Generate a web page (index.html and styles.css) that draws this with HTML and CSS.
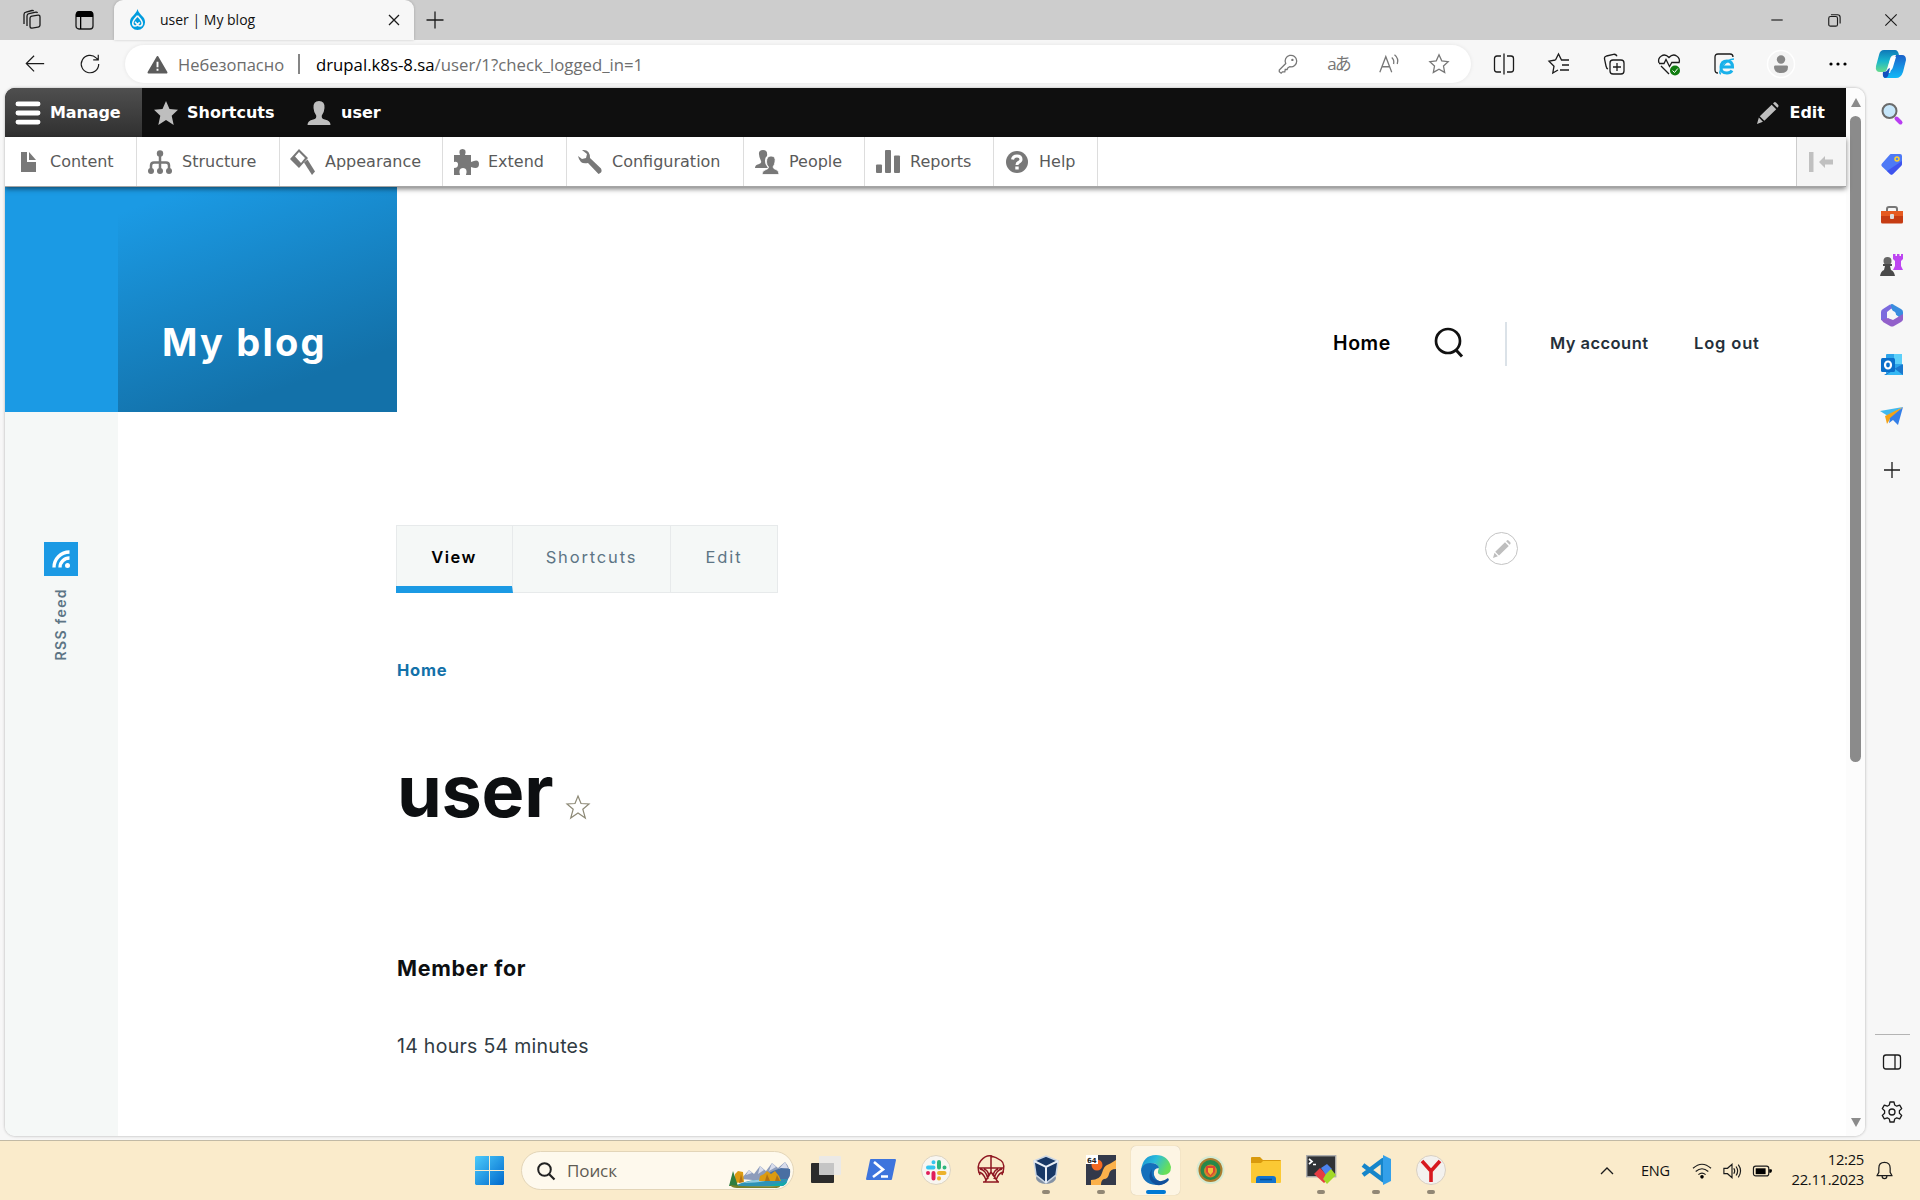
FILE: index.html
```html
<!DOCTYPE html>
<html lang="ru">
<head>
<meta charset="utf-8">
<title>user | My blog</title>
<link rel="stylesheet" href="styles.css">
</head>
<body>
<div class="desktop">
  <header class="tabstrip">
    <div class="strip-tools">
      <svg class="i24" viewBox="0 0 24 24"><g class="ln"><rect x="10" y="8" width="10" height="12" rx="2" transform="skewY(-9) translate(0 2)"/><path d="M7 18V8q0-2 2-2.400l7-1.400q1-.2 1.500.8M4 16V6.500q0-2 2-2.400l6-1.600q1.200-.2 1.500.8"/></g></svg>
      <svg class="i24" viewBox="0 0 24 24"><rect class="ln" x="4" y="4" width="17" height="17" rx="3"/><path d="M4 9V6q0-3 3-3h11q3 0 3 3v3zM8 9h1.300v12H8z"/></svg>
    </div>
    <div class="tab">
      <svg class="drop" viewBox="0 0 18 22"><path fill="#009cde" d="M9 0C8 3.500 6.300 5 4.400 7 2 9.300 1 11 1 14a8 8 0 0 0 16 0c0-3-1-4.700-3.400-7C11.700 5 10 3.500 9 0z"/><path fill="none" stroke="#f7f7f7" stroke-width="1.700" d="M9 7c-2 2.600-5 5-5 8 0 3.600 4 3.600 5.300 1.200l2-2.400M9 7c2 2.600 5 5 5 8 0 3.600-4 3.600-5.300 1.200L6.500 13.500"/></svg>
      <span class="tab-title">user | My blog</span>
      <svg class="i16" viewBox="0 0 16 16"><path class="ln" stroke-width="1.500" d="M3 3l10 10M13 3L3 13"/></svg>
    </div>
    <svg class="i24 newtab" viewBox="0 0 24 24"><path class="ln" d="M12 3.500v17M3.500 12h17"/></svg>
    <div class="wincontrols">
      <svg viewBox="0 0 16 16"><path class="ln" d="M1.500 8h13"/></svg>
      <svg viewBox="0 0 16 16"><rect class="ln" x="2" y="4" width="10" height="11" rx="2"/><path class="ln" d="M4.500 2h7.500q3 0 3 3v7"/></svg>
      <svg viewBox="0 0 16 16"><path class="ln" d="M1.500 1.500l13 13M14.500 1.500l-13 13"/></svg>
    </div>
  </header>

  <div class="navbar">
    <svg class="i24 back" viewBox="0 0 24 24"><path class="ln" stroke-width="1.600" d="M22 11.500H2.500M11 3l-8.500 8.500L11 20"/></svg>
    <svg class="i24 reload" viewBox="0 0 24 24"><path class="ln" stroke-width="1.600" d="M21.500 12a9.500 9.500 0 1 1-2.800-6.700L21 7.300M21 2v5.400h-5.500"/></svg>
    <div class="address">
      <svg class="warn" viewBox="0 0 22 20"><path fill="#5c5c5c" stroke="#5c5c5c" stroke-width="2" stroke-linejoin="round" d="M11 2l9.500 16.500h-19z"/><path stroke="#fff" stroke-width="2" d="M11 7v6M11 14.500v2"/></svg>
      <span class="insecure">Небезопасно</span>
      <span class="url-sep"></span>
      <span class="url"><b>drupal.k8s-8.sa</b>/user/1?check_logged_in=1</span>
      <div class="address-tools">
        <svg class="i24" viewBox="0 0 24 24"><path class="lg" d="M9.500 11.500A6.300 6.300 0 1 1 14 15l-2 1-1 2H9l-.5 2.500H6L4.500 22 2.500 20.500v-2z"/><circle cx="16.800" cy="7.500" r="1.300" fill="#777"/></svg>
        <span class="glyph-translate">aあ</span>
        <svg class="i24" viewBox="0 0 24 24"><path class="lg" d="M2 21L8.500 4 15 21M4.500 15h8M15 5q3 2.500 2 7M18 2q5 4 3 10"/></svg>
        <svg class="i24" viewBox="0 0 24 24"><path class="lg" d="M12 2l3 6.500 7 .9-5.100 4.800 1.300 7L12 17.700l-6.200 3.500 1.300-7L2 9.400l7-.9z"/></svg>
      </div>
    </div>
    <div class="browser-tools">
      <svg class="i24" viewBox="0 0 24 24"><path class="ln" d="M9 4H5q-2.500 0-2.500 2.500v11Q2.500 20 5 20h4M15 4h4q2.500 0 2.500 2.500v11Q21.500 20 19 20h-4M12 1.500v21"/></svg>
      <svg class="i24" viewBox="0 0 24 24"><path class="ln" d="M8.500 8L2 9.200l5 5L5.800 21l5.200-3M8.500 8L11.500 2l3 6H22M15 13h7M13 18h9"/></svg>
      <svg class="i24" viewBox="0 0 24 24"><rect class="ln" x="8" y="8" width="14" height="14" rx="3"/><path class="ln" d="M15 11v8M11 15h8M6 17q-1.500-.5-2-3L2.500 7q-.4-2.300 2-3l7-1.700q2.500-.4 3.500 2"/></svg>
      <svg class="i24" viewBox="0 0 24 24"><path class="ln" stroke-width="1.600" d="M2 11C0 5 7 0 12 5.500 17 0 24 5 22 11M2 11.500h5l2-4 3.500 7 2.300-4H22M4 14l8 8"/><circle cx="18" cy="18.500" r="5" fill="#107c10"/><path stroke="#fff" fill="none" d="M15.500 18.500l2 2 3.300-4"/></svg>
      <svg class="i24" viewBox="0 0 24 24"><path class="ln" stroke-width="1.600" d="M6 21q-3 0-3-3V5q0-3 3-3h12q3 0 3 3"/><path fill="none" stroke="#1ab1ea" stroke-width="3" d="M9.500 15h11q0-6-5.500-6t-6 6 6 6q3.500 0 5-2.500"/><path fill="none" stroke="#1ab1ea" stroke-width="1.500" d="M9 22q-3-1 2-8t11-7"/></svg>
      <svg class="avatar" viewBox="0 0 28 28"><circle cx="14" cy="14" r="13.500" fill="#f4f4f4" stroke="#fff" stroke-width="1.500"/><circle cx="14" cy="9.500" r="4.200" fill="#878787"/><path fill="#878787" d="M8 15.500h12q1 0 1 1.500 0 6-7 6t-7-6q0-1.500 1-1.500z"/></svg>
      <svg class="i24" viewBox="0 0 24 24"><circle cx="5" cy="12" r="1.600"/><circle cx="12" cy="12" r="1.600"/><circle cx="19" cy="12" r="1.600"/></svg>
      <svg class="copilot" viewBox="0 0 30 30"><defs><linearGradient id="cpa" x1="0" y1="0" x2="0" y2="1"><stop offset="0" stop-color="#0f78b8"/><stop offset=".5" stop-color="#18b5cd"/><stop offset="1" stop-color="#68dc8c"/></linearGradient><linearGradient id="cpb" x1="0" y1="0" x2="0" y2="1"><stop offset="0" stop-color="#1b61c9"/><stop offset="1" stop-color="#12baf8"/></linearGradient></defs><path fill="url(#cpb)" d="M20 6h6q4 0 4 5l-3 12q-2 6-7 6H9q-2 0-2-5h7z"/><path fill="url(#cpa)" d="M8 1h11q3 0 4 5h-4q-4 0-5 4l-3 10q-1 3-4 3H4q-5 0-4-6L3 6q1-5 5-5z"/><path fill="#fff" d="M14 11q1-3 4-3h2l-3 10q-1 4-5 4h-1z"/><path fill="#1450bd" d="M7 23q4 0 5-3l2-1-2 8q-1 2-3 2-3-1-2-6z"/></svg>
    </div>
  </div>

  <div class="window-body">
    <div class="page-frame">
      <div class="page">
        <nav class="admin-bar">
          <a class="bar-item manage"><svg viewBox="0 0 25 24"><path fill="#fff" d="M2 0h21a2 2 0 0 1 0 5H2a2 2 0 0 1 0-5zM2 9.500h21a2 2 0 0 1 0 5H2a2 2 0 0 1 0-5zM2 19h21a2 2 0 0 1 0 5H2a2 2 0 0 1 0-5z"/></svg><span>Manage</span></a>
          <a class="bar-item shortcuts"><svg viewBox="0 0 24 24"><path fill="#bebebe" d="M12 0l3.500 8 8.500.8-6.300 6 2 9.200L12 19l-7.700 5 2-9.200L0 8.800 8.500 8z"/></svg><span>Shortcuts</span></a>
          <a class="bar-item account"><svg viewBox="0 0 24 24"><path fill="#bebebe" d="M12 0q6 0 5.500 7-.2 4-2.700 7.500-.6 3.300 3 4 5.700 1 5.700 5.500H.5q0-4.500 5.700-5.500 3.600-.7 3-4Q6.700 11 6.500 7 6 0 12 0z"/></svg><span>user</span></a>
          <a class="bar-item contextual"><svg viewBox="0 0 24 24"><path fill="#bebebe" d="M16 3l5 5L8 20.500l-5-5zM17.500 1.500l1-1q1-1 2.200 0L23 3q1 1 .2 2.200l-1 1zM2 17l4.500 4.500L0 24z"/></svg><span>Edit</span></a>
        </nav>
        <nav class="admin-tray">
          <a class="t-content"><svg viewBox="0 0 24 24"><path d="M5 2h6v10h9v10H5zM13 2l7 8h-7z"/></svg><span>Content</span></a>
          <a class="t-structure"><svg viewBox="0 0 24 24"><circle cx="12" cy="3.500" r="3.200"/><circle cx="3" cy="21" r="3"/><circle cx="12" cy="21" r="3"/><circle cx="21" cy="21" r="3"/><path fill="none" stroke="#787878" stroke-width="2.500" d="M12 4v16M3 20v-4.500q0-3 3-3h12q3 0 3 3V20"/></svg><span>Structure</span></a>
          <a class="t-appearance"><svg viewBox="0 0 24 24"><path fill-rule="evenodd" d="M8 -1l9 9-9 10-9-9zM8 2L4 6.500l6 6.500 4-5z"/><path d="M13 12.500l3.500-3 7.500 12-3 3.500z"/></svg><span>Appearance</span></a>
          <a class="t-extend"><svg viewBox="0 0 24 24"><path d="M0 5h6Q4-1 8.500-1T11 5h6v7q8-4 8 2t-8 3v8h-5q2-7-3-7t-3 7H0v-7q4 0 4-3.500T0 12z"/></svg><span>Extend</span></a>
          <a class="t-configuration"><svg viewBox="0 0 24 24"><path d="M4 0q8-1 8 8L23 18.500q2 4-2.500 5.500L10 13q-8 2-10-7l4 3 4-1 1-4z"/></svg><span>Configuration</span></a>
          <a class="t-people"><svg viewBox="0 0 24 24"><path d="M8 0q5 0 4 6-3 2-1.500 8L13 18H0q0-3 3.500-3.800T6 11Q1 0 8 0z"/><path stroke="#fff" stroke-width=".8" d="M16 6q5 0 4 6-.5 3-2 5 .5 2 3 2.500 3 1 3 5H7q0-4 4-5 2.500-.5 2.500-2.500-2-2-2-5 0-6 4.500-6z"/></svg><span>People</span></a>
          <a class="t-reports"><svg viewBox="0 0 24 24"><rect y="14.500" width="6" height="8.500" rx="1"/><rect x="9" y="0" width="6" height="23" rx="1"/><rect x="18" y="5.500" width="6" height="17.500" rx="1"/></svg><span>Reports</span></a>
          <a class="t-help"><svg viewBox="0 0 24 24"><circle cx="12" cy="12" r="11"/><path fill="none" stroke="#fff" stroke-width="3" d="M7.500 9.500Q8 6 12 6t4 3.300q0 2-2.300 3-1.700.8-1.700 2.700"/><path stroke="#fff" stroke-width="3.400" d="M12 16.500v3"/></svg><span>Help</span></a>
          <a class="tray-toggle"><svg viewBox="0 0 24 20"><path fill="#c0c0c0" d="M0 0h4.500v20H0zM10 10l6-6v3.500h8v5h-8V16z"/></svg></a>
        </nav>
        <div class="site">
          <div class="rail">
            <div class="rail-top"></div>
            <svg class="rss" viewBox="0 0 34 34"><path fill="none" stroke="#fff" stroke-width="3.300" d="M10 25.500A15.500 15.500 0 0 1 25.500 10M16 25.500a9.500 9.500 0 0 1 9.500-9.500"/><circle cx="23.500" cy="23.500" r="2.500" fill="#fff"/></svg>
            <span class="rss-label">RSS feed</span>
          </div>
          <div class="site-main">
            <div class="site-header">
              <div class="branding">My blog</div>
              <div class="menu">
                <a class="m-home">Home</a>
                <svg class="m-search" viewBox="0 0 30 32"><circle cx="14" cy="14" r="12" fill="none" stroke="#111" stroke-width="2.700"/><path stroke="#111" stroke-width="3" d="M22 23l6 6.500"/></svg>
                <a class="m-account">My account</a>
                <a class="m-logout">Log out</a>
              </div>
            </div>
            <main class="content">
              <div class="tab-row">
                <div class="tabs"><a class="active">View</a><a class="tb-short">Shortcuts</a><a class="tb-edit">Edit</a></div>
                <div class="pencil"><svg viewBox="0 0 24 24"><path fill="#bebebe" d="M16 3l5 5L8 20.500l-5-5zM17.500 1.500l1-1q1-1 2.200 0L23 3q1 1 .2 2.200l-1 1zM2 17l4.500 4.500L0 24z"/></svg></div>
              </div>
              <a class="crumb">Home</a>
              <div class="title-row"><h1>user</h1><svg viewBox="0 0 24 24"><path fill="none" stroke="#8d8976" stroke-width="1.200" d="M12 1l3 7.500 8 .5-6.200 5.200 2.500 8.800-7.300-5-7.300 5 2.500-8.800L1 9l8-.5z"/></svg></div>
              <h4>Member for</h4>
              <p class="since">14 hours 54 minutes</p>
            </main>
          </div>
        </div>
      </div>
      <div class="scrollbar"><i class="up"></i><i class="thumb"></i><i class="down"></i></div>
    </div>
    <aside class="sidebar">
      <svg viewBox="0 0 24 24"><path stroke="#b83df2" stroke-width="4" stroke-linecap="round" d="M16.500 16.500l4 4"/><circle cx="9.500" cy="9" r="7" fill="#c6e6fa" stroke="#6b6b6b" stroke-width="2"/></svg>
      <svg viewBox="0 0 24 24"><path fill="#4d79f6" d="M11 2h9q2 0 2 2v8q0 1-1 2l-8 8q-1.500 1.500-3 0L2 14.500q-1.500-1.500 0-3L9.500 3q.5-1 1.500-1z"/><path fill="#373fea" d="M22 9v3q0 1-1 2l-8 8q-1.500 1.500-3 0l-3-3z" opacity=".65"/><circle cx="17" cy="7" r="2" fill="#5187e9" stroke="#ffd12e" stroke-width="1.500"/></svg>
      <svg viewBox="0 0 24 24"><path fill="none" stroke="#777" stroke-width="2" d="M7 8V6q0-2 2-2h6q2 0 2 2v2"/><rect x="1" y="8" width="22" height="12.500" rx="1.500" fill="#c63c13"/><path fill="#e65a20" d="M1 8h22v5H1z"/><rect x="10" y="11" width="4" height="5" rx="1" fill="#ddd"/></svg>
      <svg viewBox="0 0 24 24"><path fill="#bd45f1" d="M13 1h2.500v2H17V1h2.500v2H21V1h2v5l-2 2v5l2 4H13l2-4V8l-2-2z"/><circle cx="7.500" cy="8" r="4" fill="#666"/><path fill="#4a4a4a" d="M3 11h9v2h-2l1 4q3 1 4 6H0q1-5 4-6l1-4H3z"/></svg>
      <svg viewBox="0 0 24 24"><path fill="#398ddf" d="M10 2q2-2 4 0l7 4q2 1 2 3v8l-8-6-4-6z"/><path fill="#7b6ade" d="M10 1.500L3 6Q1 7 1 9v8l6 3V9l5-4z"/><path fill="#9260ca" d="M2 17l6-2 5 2 10-6v5q0 2-2 3l-7 4q-2 1-4 0l-7-4z"/><circle cx="12" cy="12" r="4" fill="#f7f7f7"/></svg>
      <svg viewBox="0 0 24 24"><rect x="6" y="1" width="16" height="20" rx="1" fill="#2ca4ea"/><path fill="#5cd0fa" d="M14 1h8v10h-8z"/><path fill="#1a78ce" d="M4 22h19V11l-9 5z"/><path fill="#36b8f4" d="M6 22h17l-8-6z"/><rect x="1" y="5" width="14" height="14" rx="1.500" fill="#0a6fca"/><ellipse cx="8" cy="12" rx="3" ry="3.500" fill="none" stroke="#fff" stroke-width="2.200"/></svg>
      <svg viewBox="0 0 24 24"><path fill="#41b9ee" d="M0 7l23-4-15 9z"/><path fill="#f4a316" d="M23 3L5 12l2 8 3-5z"/><path fill="#347fe8" d="M23 3l-5 18-5-5-4 3 1-5z"/></svg>
      <svg class="add" viewBox="0 0 24 24"><path class="ln" d="M12 4v16M4 12h16"/></svg>
      <span class="side-line"></span>
      <svg class="panel" viewBox="0 0 24 24"><rect class="ln" x="3.500" y="5" width="17" height="14" rx="2.500" stroke-width="1.600"/><path class="ln" d="M15 5v14"/></svg>
      <svg class="gear" viewBox="0 0 24 24"><path class="ln" stroke-width="1.500" stroke-linejoin="round" d="M10 2h4l.7 3 2 1.200 3-1 2 3.400-2.300 2.200v2.400l2.300 2.200-2 3.400-3-1-2 1.200-.7 3h-4l-.7-3-2-1.200-3 1-2-3.400 2.300-2.200v-2.400L2.300 8.600l2-3.400 3 1 2-1.200z"/><circle class="ln" cx="12" cy="12" r="3"/></svg>
    </aside>
  </div>

  <footer class="taskbar">
    <div class="apps">
      <svg class="start" viewBox="0 0 29 29"><defs><linearGradient id="win" x1="0" y1="0" x2="1" y2="1"><stop offset="0" stop-color="#4ccbfb"/><stop offset="1" stop-color="#0069cd"/></linearGradient></defs><path fill="url(#win)" d="M1 0h13v14H0V1zM15 0h13l1 1v13H15zM0 15h14v14H1l-1-1zM15 15h14v13l-1 1H15z"/></svg>
      <div class="search">
        <svg class="glass" viewBox="0 0 18 18"><circle cx="7.500" cy="7.500" r="6.300" fill="none" stroke="#222" stroke-width="2"/><path stroke="#222" stroke-width="2.200" d="M12 12l5.500 5.500"/></svg>
        <span>Поиск</span>
        <svg class="scene" viewBox="0 0 62 27"><path fill="#8d9cbb" d="M12 18L20 9l5 4 6-8 6 5 6-8 6 5 7-6q5 5 5 14l-5 7z"/><path fill="#d8dceb" d="M31 5l4 4-6 4zM43 2l4 4-7 4zM56 1l3 6-9 1zM20 9l3 3-6 2z"/><path fill="#496fa2" d="M34 15l10-5 8-3 9 1q1 7-3 11H40z"/><path fill="#2d93b5" d="M6 26q8-9 53-8-1 5-5 7z"/><path fill="#94cce0" d="M14 22q10-4 28-4-8 4-28 4z"/><path fill="#12a9aa" d="M38 25q10-3 20-4-2 4-6 4z"/><path fill="#dc9b12" d="M6 22V13l3-3 5 1 1 10zM30 20l1-5 4-2 3-3 4 3 4-3 4 5 2 5z"/><path fill="#b37214" d="M10 22l2-9 2 8zM36 20l2-7 3 7zM46 20l2-6 3 6z"/><path fill="#2f7e40" d="M0 25L4 10l5 15z"/><path fill="#77802b" d="M1 24q15 2 50 1 0 2-6 2H8q-5 0-7-3z"/></svg>
      </div>
      <div class="app"><svg viewBox="0 0 32 32"><rect x="1" y="9" width="23" height="20" rx="1" fill="#2b2b2b"/><rect x="9" y="2" width="22" height="19" rx="1" fill="#e9e9e9" fill-opacity=".9"/><path fill="#bdbdbd" d="M9 9h15v12H9z" opacity=".7"/></svg></div>
      <div class="app"><svg viewBox="0 0 32 32"><path fill="#3d74dd" d="M6 5h24q1 0 1 1l-4 19q0 1-1 1H2q-1 0-1-1L5 6q0-1 1-1z"/><path fill="none" stroke="#fff" stroke-width="2.600" d="M9 8l9 7.500L8 23M16 22.500h7"/></svg></div>
      <div class="app"><svg viewBox="0 0 32 32"><circle cx="16" cy="16" r="14.500" fill="#f8f6f1" stroke="#ddd4c1"/><g stroke-width="4" stroke-linecap="round"><path stroke="#36c5f0" d="M8 13.500h5.500M13.500 8.200v.1"/><path stroke="#2eb67d" d="M19 8v5.500M24.500 13.500v.1"/><path stroke="#ecb22e" d="M19 19h5.500M19 24.300v.1"/><path stroke="#e01e5a" d="M13.500 19v5.500M8 19v.1"/></g></svg></div>
      <div class="app"><svg viewBox="0 0 32 32"><g fill="none" stroke="#8f1722" stroke-width="1.500"><path d="M5 21Q1 12 6 6.500T16 2t10 4.500T27 21M16 1v17M3 14h26M8 28h16M10 28l6-10 7 10M5 15q6 1 8 10M3 18q5 0 8 8M9 15q4 1 5 7M27 15q-6 1-8 10M29 18q-5 0-8 8M23 15q-4 1-5 7"/></g></svg></div>
      <div class="app run"><svg viewBox="0 0 32 32"><ellipse cx="16" cy="24" rx="10" ry="6" fill="#8492a5"/><path fill="#183866" stroke="#cbd7e6" stroke-width="1.500" d="M16 2l12 5-2 14-10 8L6 21 4 7z"/><path fill="none" stroke="#e8eef6" stroke-width="2" d="M4 7l12 6 12-6M16 13v16"/></svg></div>
      <div class="app run"><svg viewBox="0 0 32 32"><rect x="1" y="1" width="30" height="30" fill="#33394a"/><circle cx="12" cy="11" r="5.500" fill="#f46a22"/><path fill="#fbb14b" d="M6 31v-5q9 0 11-7t5-8 9-5v9q-6 0-7 5-1 5-5 5-3 1-3 6z"/><rect x="1" y="1" width="12" height="9" fill="#fff"/><text x="2" y="8.500" class="n64">64</text></svg></div>
      <div class="app run current"><svg viewBox="0 0 32 32"><defs><linearGradient id="eg" x1="0" y1="0" x2="1" y2=".4"><stop offset="0" stop-color="#168bd1"/><stop offset=".5" stop-color="#2cbddb"/><stop offset="1" stop-color="#68df58"/></linearGradient></defs><path fill="url(#eg)" d="M1 16Q3 1 16 1q12 0 15 12 0 8-8 8-6 0-5-4 2-4-2-7-7-3-15 6z"/><path fill="#1570bb" d="M1 16Q3 9 10 9q8 0 9 5-6 0-5 7 2 7 10 7 2 0 4-1-4 4-12 4Q2 30 1 16z"/><path fill="#10509c" d="M12 15q-2 9 4 11 6 3 12-2l1 2q-5 6-12 5-12-5-5-16z"/></svg></div>
      <div class="app"><svg viewBox="0 0 32 32"><circle cx="15.500" cy="16" r="14" fill="#d5ead3"/><circle cx="15.500" cy="16" r="12" fill="#a97c2e"/><circle cx="15.500" cy="16" r="10" fill="#27884a"/><circle cx="15.500" cy="17" r="6.500" fill="#ce852b"/><path fill="#df4433" d="M11 12h9v6l-4.500 5-4.500-5z"/><path fill="#f1bd38" d="M13 14h5v4l-2.500 3-2.500-3z"/></svg></div>
      <div class="app"><svg viewBox="0 0 32 32"><path fill="#d99a0d" d="M1 4q0-1 1-1h8l3 3h17q1 0 1 1v6H1z"/><path fill="#fbc934" d="M13 7h18v21q0 1-1 1H2q-1 0-1-1V9h10z"/><path fill="#1273cd" d="M6 29v-4q0-3 3-3h14q3 0 3 3v4z"/><path stroke="#064e94" stroke-width="1.500" d="M10 25.500h12"/></svg></div>
      <div class="app run"><svg viewBox="0 0 32 32"><rect x="1.700" y="1.700" width="29" height="21" fill="#303236" stroke="#acacac" stroke-width="1.400"/><path fill="none" stroke="#fff" stroke-width="1.700" d="M4 5l3 2.500L4 10M8 10.500h3"/><path fill="#e63c43" d="M9 20l6-6 10 10-6 5z"/><path fill="#4c82ee" d="M16 14l6-4 5 5-6 6z"/><path fill="#a3d928" d="M21 20l5-5 5 6-9 9-4-5z"/></svg></div>
      <div class="app run"><svg viewBox="0 0 32 32"><path fill="none" stroke="#1585ca" stroke-width="4.500" stroke-linejoin="round" d="M3 11l20 15V6L3 21"/><path fill="#33a0ea" d="M23 1l8 4v22l-8 4z"/></svg></div>
      <div class="app run"><svg viewBox="0 0 32 32"><circle cx="16" cy="16" r="14.500" fill="#f3f1ee" stroke="#d9d0c2"/><path fill="none" stroke="#d7191f" stroke-width="3.600" d="M7 7l9 10 9-10M16 16v12"/></svg></div>
    </div>
    <div class="systray">
      <svg class="chev" viewBox="0 0 16 16"><path class="ln" stroke-width="1.800" d="M2 11l6-6 6 6"/></svg>
      <span class="lang">ENG</span>
      <svg class="ico" viewBox="0 0 22 20"><g class="ln"><path d="M1 7q10-9 20 0M4 10.500q7-6 14 0M7 14q4-3.500 8 0"/></g><circle cx="11" cy="16.500" r="2"/></svg>
      <svg class="ico" viewBox="0 0 22 20"><g class="ln"><path d="M2 7h4l5-4.500v15L6 13H2zM13 7q2 3 0 6M15.500 5q3.500 5 0 10M18 3q5 7 0 14"/></g></svg>
      <svg class="ico" viewBox="0 0 22 20"><rect class="ln" x="1.500" y="4.500" width="17" height="11" rx="2.500" stroke-width="1.700"/><rect x="4" y="7" width="11" height="6.500"/><path d="M19 8h2q1 0 1 1.500T21 12h-2z"/></svg>
      <div class="clock"><span>12:25</span><span>22.11.2023</span></div>
      <svg class="bell" viewBox="0 0 18 20"><path class="ln" stroke-width="1.500" stroke-linejoin="round" d="M1 15.500h16l-2-3.500V7.500q0-6-6-6t-6 6V12zM6.500 16q0 2.500 2.500 2.500t2.500-2.500"/></svg>
    </div>
  </footer>
</div>
</body>
</html>
```
FILE: styles.css
```css
* { box-sizing: border-box; }
body { margin: 0; width: 1920px; height: 1200px; overflow: hidden; font-family: "Open Sans", "Noto Sans", sans-serif; color: #111; }
svg { display: block; flex: none; overflow: visible; }
span, a { white-space: nowrap; }
.ln { fill: none; stroke: #1b1b1b; stroke-width: 1.300; }
.lg { fill: none; stroke: #777; stroke-width: 1.400; }
.i24 { width: 24px; height: 24px; }
.i16 { width: 16px; height: 16px; }
.desktop { display: flex; flex-direction: column; height: 1200px; background: #f7f7f7; }

/* Browser tab strip */
.tabstrip { height: 40px; display: flex; align-items: center; background: #cdcdcd; padding-bottom: 1px; }
.strip-tools { display: flex; gap: 28px; padding-left: 20px; width: 114px; }
.tab { width: 300px; height: 40px; display: flex; align-items: center; padding: 0 12px 0 15px; background: #f7f7f7; border-radius: 9px 9px 0 0; box-shadow: 0 0 3px rgba(0,0,0,.2); }
.drop { width: 17px; height: 21px; }
.tab-title { font-size: 14px; margin-left: 14px; flex: 1; }
.newtab { margin-left: 9px; }
.wincontrols { display: flex; gap: 43px; margin-left: auto; margin-right: 22px; }
.wincontrols svg { width: 14px; height: 14px; }

/* Address row */
.navbar { height: 48px; display: flex; align-items: center; padding-left: 24px; }
.back, .reload { width: 22px; height: 22px; }
.reload { margin-left: 33px; }
.address { width: 1346px; height: 38px; margin-left: 24px; padding: 0 21px 0 22px; display: flex; align-items: center; background: #fff; border-radius: 19px; box-shadow: 0 0 4px rgba(0,0,0,.08); }
.warn { width: 21px; height: 19px; }
.insecure { width: 120px; margin-left: 10px; color: #6c6c6c; font-size: 16.500px; }
.url-sep { width: 2px; height: 20px; background: #858585; }
.url { margin-left: 16px; color: #6e6e6e; font-size: 16.750px; }
.url b { font-weight: 400; color: #000; }
.address-tools { display: flex; align-items: center; margin-left: auto; gap: 28px; }
.address-tools .i24 { width: 22px; height: 22px; }
.glyph-translate { width: 23px; display: flex; justify-content: center; font: 17px/22px "Open Sans", "Noto Sans CJK JP", sans-serif; color: #777; letter-spacing: -2px; }
.browser-tools { display: flex; align-items: center; margin-left: 21px; gap: 31px; }
.browser-tools .avatar { width: 28px; height: 28px; margin: 0; }
.browser-tools .copilot { width: 30px; height: 30px; margin-left: -5px; }

/* Browser body */
.window-body { height: 1052px; display: flex; padding-left: 5px; }
.page-frame { width: 1860px; height: 1048px; display: flex; background: #fff; border-radius: 10px; overflow: hidden; box-shadow: 0 0 3px rgba(0,0,0,.3); }
.page { width: 1841px; display: flex; flex-direction: column; }
.scrollbar { width: 19px; background: #fcfcfc; display: flex; flex-direction: column; align-items: center; padding: 10px 0 9px; }
.up, .down { width: 0; height: 0; border: 5px solid transparent; }
.up { border-bottom: 9px solid #8b8b8b; border-top: 0; }
.thumb { width: 11px; height: 646px; margin-top: 9px; background: #8b8b8b; border-radius: 6px; }
.down { margin-top: auto; border-top: 9px solid #8b8b8b; border-bottom: 0; }

/* Drupal toolbar */
.admin-bar { height: 49px; display: flex; background: #0f0f0f; font: bold 16px "DejaVu Sans", sans-serif; color: #fff; }
.bar-item { display: flex; align-items: center; gap: 9px; }
.bar-item svg { width: 24px; height: 24px; }
.manage { width: 137px; padding-left: 11px; gap: 10px; background: linear-gradient(#4f4f4f, #303030); }
.manage span { letter-spacing: -.1px; }
.shortcuts { width: 153px; padding-left: 12px; }
.account { padding-left: 12px; gap: 10px; }
.contextual { margin-left: auto; padding-right: 21px; gap: 10px; }
.contextual svg { width: 22px; height: 22px; }
.admin-tray { height: 50px; display: flex; background: #fff; font: 16px "DejaVu Sans", sans-serif; color: #5a5a5a; border-bottom: 1px solid #a5a5a5; box-shadow: 0 2px 5px rgba(0,0,0,.5); position: relative; }
.admin-tray a { display: flex; align-items: center; padding-left: 11px; border-right: 1px solid #ddd; }
.admin-tray svg { width: 24px; height: 24px; margin-right: 10px; fill: #787878; }
.t-content { width: 132px; }
.t-structure { width: 143px; }
.t-appearance { width: 163px; }
.t-extend { width: 124px; }
.t-configuration { width: 177px; }
.t-people { width: 121px; }
.t-reports { width: 129px; }
.t-help { width: 104px; }
.admin-tray .tray-toggle { width: 50px; margin-left: auto; border-left: 1px solid #ccc; border-right: 0; background: #f5f5f5; padding-left: 12px; }
.admin-tray .tray-toggle svg { height: 20px; }

/* Site */
.site { flex: 1; display: flex; font-family: Inter, "Open Sans", sans-serif; }
.rail { width: 113px; background: #f5f8f7; display: flex; flex-direction: column; align-items: center; padding-right: 2px; }
.rail-top { width: 113px; height: 225px; margin-right: -2px; background: #1b9ae4; }
.rss { width: 34px; height: 34px; margin-top: 130px; background: #1b9ae4; }
.rss-label { margin-top: 12px; writing-mode: vertical-rl; transform: rotate(180deg); font-size: 14px; font-weight: 600; letter-spacing: 1.400px; color: #5d7585; }
.site-main { flex: 1; }
.site-header { height: 225px; display: flex; justify-content: space-between; }
.branding { width: 279px; padding: 131px 0 0 44px; background: linear-gradient(160deg, #1b9ae4 8%, #1371a9 80%); color: #fff; font-size: 38px; font-weight: 700; line-height: 48px; letter-spacing: 2.200px; white-space: nowrap; }
.menu { display: flex; align-items: center; height: 44px; margin-top: 135px; padding-right: 86px; font-weight: 600; }
.menu a { line-height: 42px; height: 44px; }
.m-home { width: 101px; font-size: 19.500px; color: #000; letter-spacing: .6px; }
.m-search { width: 30px; height: 32px; margin-top: -2px; }
.m-account { margin-left: 41px; padding-left: 43px; width: 189px; font-size: 16.500px; color: #25303a; border-left: 2px solid #dbe2e8; letter-spacing: .45px; }
.m-logout { width: 66px; font-size: 16.500px; color: #25303a; letter-spacing: .85px; }
.content { padding: 113px 0 0 278px; display: flex; flex-direction: column; align-items: flex-start; }
.tab-row { display: flex; }
.tabs { display: flex; width: 382px; height: 68px; background: #f5f8f7; border: 1px solid #e7eaeb; font-size: 16.500px; line-height: 62px; letter-spacing: 1.850px; color: #5d7585; }
.tabs a { border-right: 1px solid #e7eaeb; text-align: center; }
.tabs .active { width: 117px; margin: 0 0 -1px -1px; border-bottom: 7px solid #1b9ae4; color: #000; font-weight: 600; letter-spacing: 1.400px; }
.tabs .tb-short { width: 158px; }
.tabs .tb-edit { flex: 1; border: 0; }
.pencil { width: 33px; height: 33px; margin: 7px 0 0 707px; border: 1px solid #c4c4c4; border-radius: 50%; display: grid; place-items: center; }
.pencil svg { width: 18px; height: 18px; }
.crumb { margin: 66px 0 0 1px; font-size: 16.500px; line-height: 22px; font-weight: 700; color: #1371a9; letter-spacing: .75px; }
.title-row { display: flex; margin: 60px 0 0 1px; }
h1 { margin: 0; width: 169px; font-size: 72px; line-height: 100px; font-weight: 700; letter-spacing: -.3px; color: #0d0f11; }
.title-row svg { width: 24px; height: 24px; margin-top: 54px; }
h4 { margin: 112px 0 0 1px; font-size: 21.500px; line-height: 30px; font-weight: 700; color: #0d0f11; letter-spacing: .65px; }
.since { margin: 48px 0 0 1px; font-size: 19.500px; line-height: 30px; color: #313b43; letter-spacing: .28px; }

/* Browser sidebar */
.sidebar { width: 54px; display: flex; flex-direction: column; align-items: center; padding: 14px 0 0; }
.sidebar svg { width: 24px; height: 24px; margin-bottom: 26.300px; }
.sidebar .add { margin-top: 4px; }
.side-line { width: 35px; height: 1px; background: #b4b4b4; margin-top: auto; }
.sidebar .panel { margin: 15px 0 26px; }
.sidebar .gear { margin: 0 0 16px; }

/* Taskbar */
.taskbar { height: 60px; display: flex; align-items: center; background: #faebcb; border-top: 1px solid #c1b9a5; padding-left: 475px; }
.apps { display: flex; align-items: center; }
.start { width: 29px; height: 29px; }
.search { width: 273px; height: 39px; margin: 0 4px 0 17px; padding: 0 2px 0 15px; display: flex; align-items: center; background: #fef9ed; border: 1px solid #e3d5b8; border-radius: 20px; }
.glass { width: 18px; height: 18px; }
.search span { font-size: 17px; color: #5f5b53; margin-left: 12px; flex: 1; letter-spacing: -.1px; }
.scene { width: 62px; height: 27px; margin-top: 8px; }
.app { width: 49px; height: 49px; margin: 0 3px; display: flex; flex-direction: column; align-items: center; padding-top: 8px; border-radius: 5px; }
.app svg { width: 32px; height: 32px; }
.run::after { content: ""; width: 8px; height: 4px; margin-top: 4px; border-radius: 2px; background: #918775; }
.current { background: #fdf5e4; box-shadow: 0 0 1px rgba(0,0,0,.25); }
.current::after { width: 20px; background: #0078d4; }
.n64 { font: bold 7px "DejaVu Sans", sans-serif; fill: #222; }
.systray { display: flex; align-items: center; margin-left: auto; margin-right: 27px; }
.chev { width: 16px; height: 16px; }
.lang { width: 30px; margin: 0 21px 0 26px; font-size: 14.500px; letter-spacing: -.2px; }
.ico { width: 20px; height: 18px; margin-right: 10px; }
.clock { width: 82px; display: flex; flex-direction: column; text-align: right; font-size: 14.800px; line-height: 20px; letter-spacing: -.3px; margin: -3px 12px 0 0; }
.bell { width: 17px; height: 19px; }
```
